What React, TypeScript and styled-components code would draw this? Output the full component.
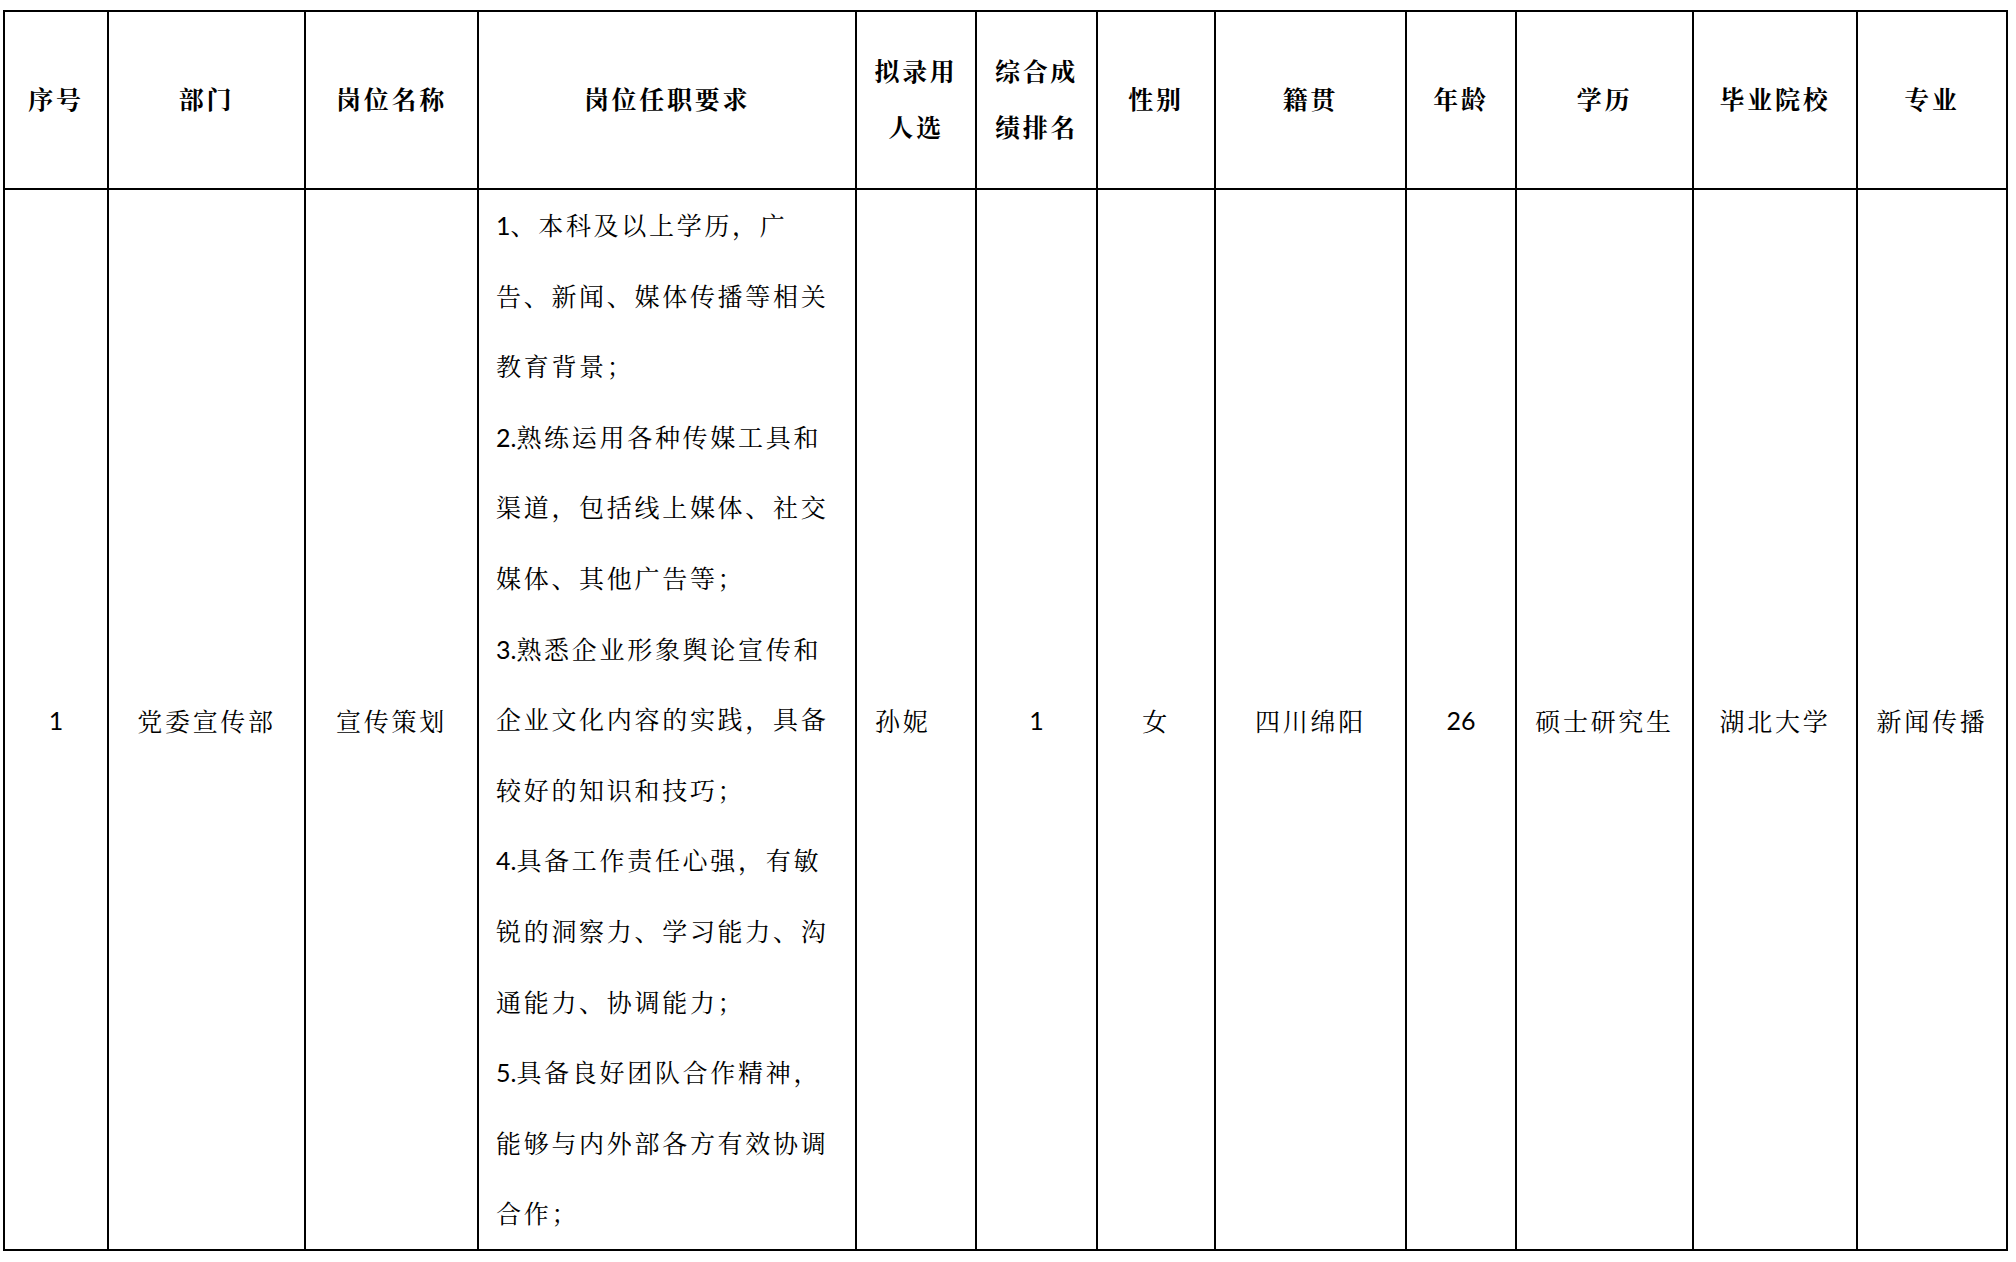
import React, { FC } from "react";
import styled, { createGlobalStyle } from "styled-components";

//Fonts
const headFont = `"Noto Serif CJK SC", "Liberation Serif", "Noto Sans CJK SC", serif`;
const bodyFont = `Lato, "Noto Serif CJK SC", "Noto Sans CJK SC", serif`;

const GlobalStyle = createGlobalStyle`
  html, body {
    margin: 0;
    padding: 0;
    background: #ffffff;
  }
  body {
    font-family: ${bodyFont};
    color: #000000;
  }
`;

//Styles
const Page = styled.div`
  padding: 10px 0 0 3px;
`;

const Table = styled.table`
  border-collapse: collapse;
  table-layout: fixed;
  width: 2005px;
`;

const Col = styled.col<{ $w: number }>`
  width: ${(p) => p.$w}px;
`;

const HeadCell = styled.th`
  height: 172px;
  padding: 0 4px 4px;
  border: 2px solid #000;
  font-family: ${headFont};
  font-size: 25px;
  font-weight: 700;
  letter-spacing: 2.7px;
  line-height: 56px;
  text-align: center;
  vertical-align: middle;
`;

const Cell = styled.td<{ $align?: "left" | "center"; $num?: boolean }>`
  height: 1059px;
  padding: ${(p) => (p.$align === "left" ? "0 4px 0 18px" : "0 4px")};
  border: 2px solid #000;
  font-size: 25px;
  font-weight: 400;
  letter-spacing: ${(p) => (p.$num ? "0" : "2.7px")};
  text-align: ${(p) => p.$align ?? "center"};
  vertical-align: middle;
  white-space: nowrap;
`;

const ReqCell = styled.td`
  padding: 0 0 0 17px;
  border: 2px solid #000;
  font-size: 25px;
  font-weight: 400;
  letter-spacing: 2.7px;
  vertical-align: middle;
`;

const ReqLine = styled.div`
  line-height: 70.6px;
  white-space: nowrap;
`;

const Num = styled.span`
  letter-spacing: 0;
`;

interface Column {
  label: string[];
  w: number;
}

const columns: Column[] = [
  { label: ["序号"], w: 104 },
  { label: ["部门"], w: 197 },
  { label: ["岗位名称"], w: 173 },
  { label: ["岗位任职要求"], w: 378 },
  { label: ["拟录用", "人选"], w: 120 },
  { label: ["综合成", "绩排名"], w: 121 },
  { label: ["性别"], w: 118 },
  { label: ["籍贯"], w: 191 },
  { label: ["年龄"], w: 110 },
  { label: ["学历"], w: 177 },
  { label: ["毕业院校"], w: 164 },
  { label: ["专业"], w: 150 },
];

const requirements = [
  "1、本科及以上学历，广",
  "告、新闻、媒体传播等相关",
  "教育背景；",
  "2.熟练运用各种传媒工具和",
  "渠道，包括线上媒体、社交",
  "媒体、其他广告等；",
  "3.熟悉企业形象舆论宣传和",
  "企业文化内容的实践，具备",
  "较好的知识和技巧；",
  "4.具备工作责任心强，有敏",
  "锐的洞察力、学习能力、沟",
  "通能力、协调能力；",
  "5.具备良好团队合作精神，",
  "能够与内外部各方有效协调",
  "合作；",
];

// split a leading "2." so the digits keep their natural spacing
const renderLine = (line: string) => {
  const m = line.match(/^(\d\.?)(.*)$/);
  if (!m) return line;
  return (
    <>
      <Num>{m[1]}</Num>
      {m[2]}
    </>
  );
};

const App: FC = () => {
  return (
    <Page>
      <GlobalStyle />
      <Table>
        <colgroup>
          {columns.map((c, i) => (
            <Col key={i} $w={c.w} />
          ))}
        </colgroup>
        <thead>
          <tr>
            {columns.map((c, i) => (
              <HeadCell key={i}>
                {c.label.map((part, j) => (
                  <React.Fragment key={j}>
                    {j > 0 && <br />}
                    {part}
                  </React.Fragment>
                ))}
              </HeadCell>
            ))}
          </tr>
        </thead>
        <tbody>
          <tr>
            <Cell $num>1</Cell>
            <Cell>党委宣传部</Cell>
            <Cell>宣传策划</Cell>
            <ReqCell>
              {requirements.map((line) => (
                <ReqLine key={line}>{renderLine(line)}</ReqLine>
              ))}
            </ReqCell>
            <Cell $align="left">孙妮</Cell>
            <Cell $num>1</Cell>
            <Cell>女</Cell>
            <Cell>四川绵阳</Cell>
            <Cell $num>26</Cell>
            <Cell>硕士研究生</Cell>
            <Cell>湖北大学</Cell>
            <Cell>新闻传播</Cell>
          </tr>
        </tbody>
      </Table>
    </Page>
  );
};

export default App;
